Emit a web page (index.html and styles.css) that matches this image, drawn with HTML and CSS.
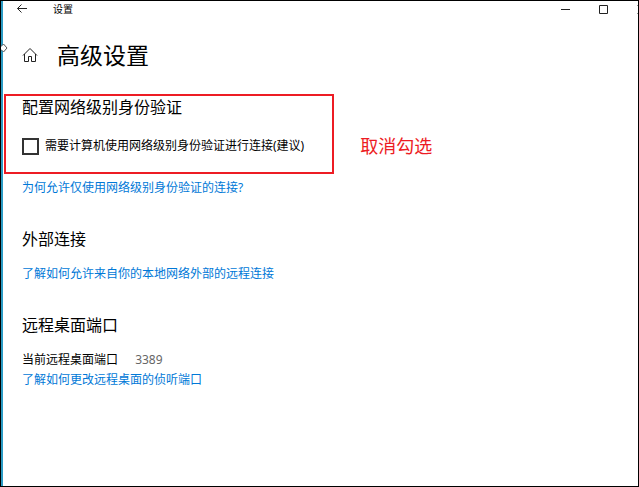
FILE: index.html
```html
<!DOCTYPE html>
<html lang="zh-CN">
<head>
    <meta charset="UTF-8">
    <meta name="viewport" content="width=device-width, initial-scale=1.0">
    <title>设置</title>
    <link rel="stylesheet" href="styles.css">
</head>
<body>

<div class="window">
    <svg class="edge-marker" viewBox="0 0 8 10" aria-hidden="true">
        <path d="M0 3.5 L2.5 1 L6 5 L2.5 9 L0 6.5"/>
    </svg>

    <header class="titlebar">
        <button type="button" class="back" aria-label="返回">
            <svg width="12" height="10" viewBox="0 0 12 10"><path d="M11 4.5 H1.5 M5.5 .5 L1.5 4.5 L5.5 8.5"/></svg>
        </button>
        <span class="app-name">设置</span>
        <div class="window-buttons">
            <button type="button" aria-label="最小化">
                <svg width="9" height="9" viewBox="0 0 9 9"><path d="M0 4.5 H9"/></svg>
            </button>
            <button type="button" aria-label="最大化">
                <svg width="9" height="9" viewBox="0 0 9 9"><path d="M.5 .5 H8.5 V8.5 H.5 Z"/></svg>
            </button>
            <button type="button" aria-label="关闭">
                <svg width="9" height="9" viewBox="0 0 9 9"><path d="M.5 .5 L8.5 8.5 M8.5 .5 L.5 8.5"/></svg>
            </button>
        </div>
    </header>

    <div class="page-title">
        <a href="#" class="home" aria-label="主页">
            <svg width="16" height="16" viewBox="0 0 16 16"><path d="M1 8.5 L8 1.5 L15 8.5 M2.5 7 V14.5 H6.5 V9.5 H9.5 V14.5 H13.5 V7"/></svg>
        </a>
        <h1>高级设置</h1>
    </div>

    <main>
        <section>
            <div class="callout">
                <div class="highlight">
                    <h2>配置网络级别身份验证</h2>
                    <div class="option">
                        <input type="checkbox" id="nla">
                        <label for="nla">需要计算机使用网络级别身份验证进行连接(建议)</label>
                    </div>
                </div>
                <p class="note">取消勾选</p>
            </div>
            <a href="#">为何允许仅使用网络级别身份验证的连接?</a>
        </section>

        <section>
            <h2>外部连接</h2>
            <a href="#">了解如何允许来自你的本地网络外部的远程连接</a>
        </section>

        <section>
            <h2>远程桌面端口</h2>
            <p class="port">当前远程桌面端口 <span>3389</span></p>
            <a href="#">了解如何更改远程桌面的侦听端口</a>
        </section>
    </main>
</div>

</body>
</html>
```
FILE: styles.css
```css
* {
    box-sizing: border-box;
}

body {
    margin: 0;
    font-family: "Noto Sans", "Noto Sans CJK SC", sans-serif;
    font-size: 12px;
    line-height: 20px;
    color: #000;
    background-color: #fff;
}

h1,
h2,
p {
    margin: 0;
    font-weight: 400;
}

svg {
    display: block;
    fill: none;
    stroke: #222;
}

button {
    display: flex;
    align-items: center;
    justify-content: center;
    padding: 0;
    border: none;
    background: none;
}

.window {
    position: relative;
    min-height: 100vh;
    border: 1px solid #000;
    overflow: hidden;
}

/* accent strip along the left side */
.window::before {
    content: "";
    position: absolute;
    top: 0;
    bottom: 0;
    left: 0;
    width: 2px;
    background-color: #2b9bc4;
}

.edge-marker {
    position: absolute;
    top: 42px;
    left: 0;
    width: 8px;
    height: 10px;
    fill: #fff;
    stroke: #555;
}

.titlebar {
    display: flex;
    align-items: center;
    height: 16px;
    padding-left: 15px;
}

.back {
    width: 12px;
    height: 16px;
}

.app-name {
    margin-left: 25px;
    font-size: 10px;
    line-height: 16px;
}

/* the close button runs past the window edge */
.window-buttons {
    display: flex;
    margin-left: auto;
    margin-right: -22px;
}

.window-buttons button {
    width: 38px;
    height: 16px;
}

.page-title {
    display: flex;
    align-items: center;
    gap: 19px;
    padding: 20px 21px 0;
}

h1 {
    font-size: 23px;
    line-height: 36px;
}

h2 {
    font-size: 16px;
    line-height: 24px;
}

main {
    padding: 21px 21px 20px 3px;
}

section {
    padding-left: 18px;
    margin-bottom: 29px;
}

section > h2 {
    margin-bottom: 13px;
}

main a {
    display: table;
    color: #0078d7;
    text-decoration: none;
}

main a:hover {
    color: #666;
}

.callout {
    display: flex;
    align-items: center;
    gap: 26px;
    margin-left: -18px;
    margin-bottom: 4px;
}

.highlight {
    padding: 0 28px 16px 16px;
    border: 2px solid #ed1c24;
}

.highlight h2 {
    line-height: 22px;
}

.option {
    display: flex;
    align-items: center;
    gap: 6px;
    margin-top: 18px;
}

.option input {
    appearance: none;
    width: 17px;
    height: 17px;
    margin: 0;
    border: 2px solid #333;
    background-color: #fff;
}

.option input:checked {
    background-color: #0078d7;
}

.note {
    margin-top: 24px;
    font-size: 18px;
    line-height: 24px;
    color: #ed1c24;
}

.port span {
    margin-left: 14px;
    color: #666;
}
```
